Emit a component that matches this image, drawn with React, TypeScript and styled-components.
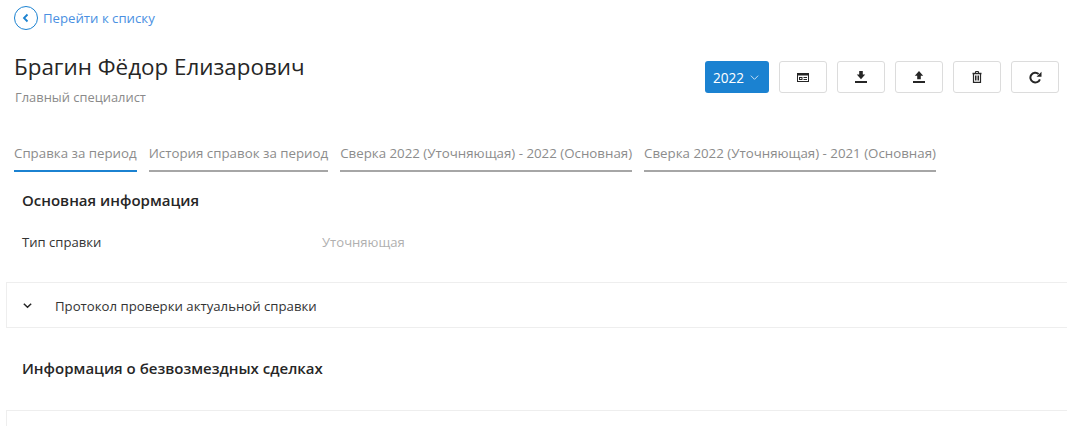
import React from "react";
import styled, { createGlobalStyle } from "styled-components";

const Global = createGlobalStyle`
  html, body { margin: 0; padding: 0; background: #fff; overflow: hidden; }
  body { font-family: "Open Sans", "Noto Sans", sans-serif; width: 1067px; height: 426px; }
`;

const Page = styled.div`
  width: 1067px;
  height: 426px;
  overflow: hidden;
  display: flex;
  flex-direction: column;
  & > * { flex-shrink: 0; }
`;

const BackLink = styled.a`
  display: flex;
  align-items: center;
  gap: 5px;
  height: 24px;
  margin: 6px 0 0 14px;
  color: #4a90e2;
  font-size: 13.2px;
  cursor: pointer;
`;

const BackCircle = styled.span`
  width: 24px;
  height: 24px;
  box-sizing: border-box;
  border: 1px solid #1b82d1;
  border-radius: 50%;
  display: flex;
  align-items: center;
  justify-content: center;
  color: #1b82d1;
`;

const Header = styled.header`
  display: flex;
  justify-content: space-between;
  align-items: flex-start;
  margin-top: 16px;
  padding: 0 8px 0 14px;
`;

const Person = styled.div`
  display: flex;
  flex-direction: column;
`;

const Name = styled.h1`
  margin: 0;
  height: 42px;
  line-height: 42px;
  font-size: 22.4px;
  font-weight: 400;
  color: #262626;
`;

const Role = styled.div`
  font-size: 12.9px;
  line-height: 20px;
  margin: -1px 0 0 1px;
  color: #8a8a8a;
`;

const Actions = styled.div`
  display: flex;
  gap: 10px;
  margin-top: 15px;
`;

const YearButton = styled.button`
  width: 64px;
  height: 32px;
  border: 0;
  border-radius: 3px;
  background: #1b82d1;
  color: #fff;
  font: 400 13.6px "Open Sans", sans-serif;
  display: flex;
  align-items: center;
  justify-content: center;
  gap: 5px;
  padding: 0 1px 0 0;
`;

const IconButton = styled.button`
  width: 48px;
  height: 32px;
  box-sizing: border-box;
  background: #fff;
  border: 1px solid #dcdcdc;
  border-radius: 3px;
  display: flex;
  align-items: center;
  justify-content: center;
  color: #262626;
  padding: 0;
`;

const Tabs = styled.nav`
  display: flex;
  gap: 12px;
  margin: 30px 0 0 14px;
`;

const Tab = styled.div<{ $active?: boolean }>`
  height: 35px;
  box-sizing: border-box;
  line-height: 32px;
  font-size: 13.3px;
  white-space: nowrap;
  color: #8c8c8c;
  border-bottom: 2px solid ${(p) => (p.$active ? "#1b82d1" : "#a6a6a6")};
`;

const Section = styled.section<{ $top: number }>`
  padding-left: 22px;
  margin-top: ${(p) => p.$top}px;
`;

const Heading = styled.h2`
  margin: 0;
  font-size: 15px;
  line-height: 20px;
  font-weight: 600;
  color: #262626;
`;

const Row = styled.div`
  display: grid;
  grid-template-columns: 300px 1fr;
  margin-top: 22px;
  font-size: 13.1px;
  line-height: 20px;
`;

const RowLabel = styled.span`
  color: #333;
`;

const RowValue = styled.span`
  color: #b0b0b0;
`;

const Accordion = styled.div`
  margin: 30px -2px 0 6px;
  height: 46px;
  box-sizing: border-box;
  border: 1px solid #eee;
  display: flex;
  align-items: center;
  padding-left: 15px;
  gap: 22px;
  font-size: 13.2px;
  color: #333;
`;

const AccordionTitle = styled.span`
  padding-top: 2px;
`;

const Card = styled.div`
  margin: 32px -2px 0 6px;
  height: 46px;
  box-sizing: border-box;
  border: 1px solid #eee;
`;

const Chevron = ({ size, width, color }: { size: number; width: number; color: string }) => (
  <svg width={size} height={size} viewBox="0 0 12 12" fill="none" stroke={color} strokeWidth={width}>
    <path d="M2 4l4 4 4-4" />
  </svg>
);

export default function App() {
  return (
    <Page>
      <Global />
      <BackLink>
        <BackCircle>
          <svg width="12" height="12" viewBox="0 0 12 12" fill="none" stroke="currentColor" strokeWidth="1.8">
            <path d="M7.500 2.500L4 6l3.500 3.500" />
          </svg>
        </BackCircle>
        Перейти к списку
      </BackLink>
      <Header>
        <Person>
          <Name>Брагин Фёдор Елизарович</Name>
          <Role>Главный специалист</Role>
        </Person>
        <Actions>
          <YearButton>
            2022
            <Chevron size={11} width={1} color="#d5e8f7" />
          </YearButton>
          <IconButton aria-label="Карточка">
            <svg width="12" height="9" viewBox="0 0 12 9">
              <path fill="currentColor" fillRule="evenodd" d="M0 0h12v9H0zM1 2.500V8h10V2.500zM2 4h3.500v3H2zM3 5v1h1.500V5zM6.500 4H10v1H6.500zM6.500 6H10v1H6.500z" />
            </svg>
          </IconButton>
          <IconButton aria-label="Скачать">
            <svg width="12" height="12" viewBox="0 0 12 12">
              <path fill="currentColor" d="M4.200 0h3.600v3.500h2.400L6 8.200 1.800 3.500h2.400zM0 10h12v2H0z" />
            </svg>
          </IconButton>
          <IconButton aria-label="Загрузить">
            <svg width="12" height="12" viewBox="0 0 12 12">
              <path fill="currentColor" d="M6 0l4.200 4.700H7.800v3.500H4.200V4.700H1.800zM0 10h12v2H0z" />
            </svg>
          </IconButton>
          <IconButton aria-label="Удалить">
            <svg width="10" height="12" viewBox="0 0 10 12" fill="none" stroke="currentColor">
              <path strokeWidth="1.500" d="M0.500 2.500h9" />
              <path d="M3.500 2V.5h3V2" />
              <path strokeWidth="1.200" d="M1.500 3v8.400h7V3" />
              <path d="M3.500 4.500v5M5 4.500v5M6.500 4.500v5" />
            </svg>
          </IconButton>
          <IconButton aria-label="Обновить">
            <svg width="13" height="13" viewBox="0 0 13 13" fill="none">
              <path stroke="currentColor" strokeWidth="2" d="M10.900 8.300A4.900 4.900 0 1 1 9.600 3" />
              <path fill="currentColor" d="M12.500 0.800v5h-5z" />
            </svg>
          </IconButton>
        </Actions>
      </Header>
      <Tabs>
        <Tab $active>Справка за период</Tab>
        <Tab>История справок за период</Tab>
        <Tab>Сверка 2022 (Уточняющая) - 2022 (Основная)</Tab>
        <Tab>Сверка 2022 (Уточняющая) - 2021 (Основная)</Tab>
      </Tabs>
      <Section $top={18}>
        <Heading>Основная информация</Heading>
        <Row>
          <RowLabel>Тип справки</RowLabel>
          <RowValue>Уточняющая</RowValue>
        </Row>
      </Section>
      <Accordion>
        <Chevron size={11} width={1.6} color="#262626" />
        <AccordionTitle>Протокол проверки актуальной справки</AccordionTitle>
      </Accordion>
      <Section $top={30}>
        <Heading>Информация о безвозмездных сделках</Heading>
      </Section>
      <Card />
    </Page>
  );
}
